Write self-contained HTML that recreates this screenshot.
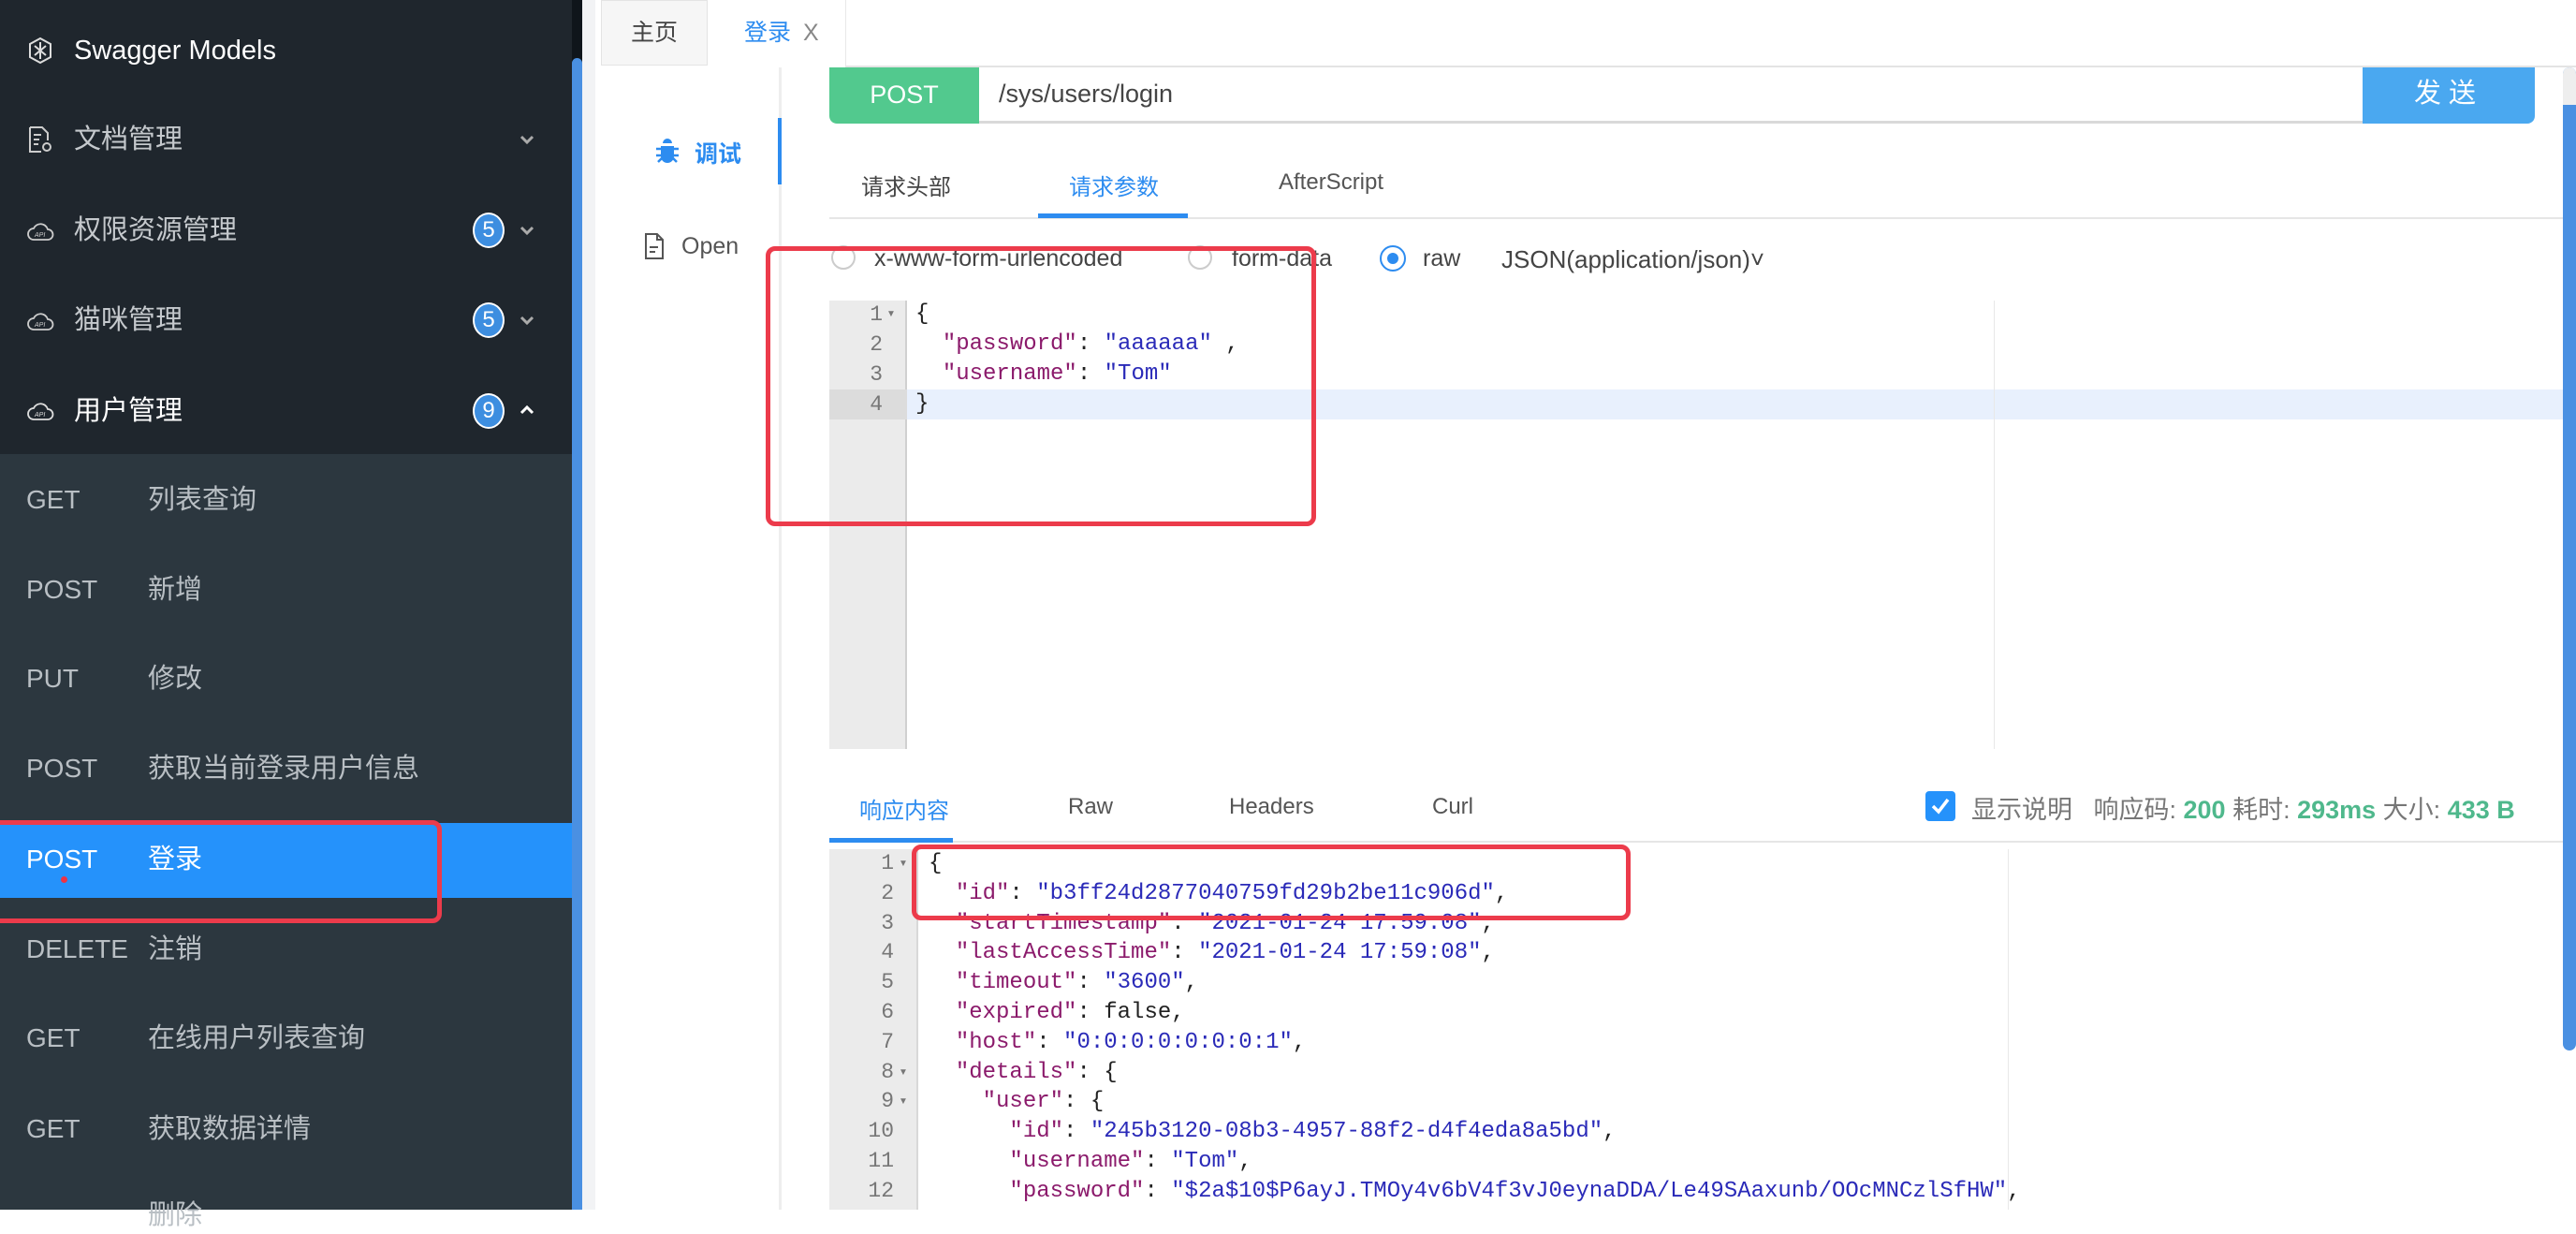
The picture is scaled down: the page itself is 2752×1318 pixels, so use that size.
<!DOCTYPE html>
<html><head><meta charset="utf-8">
<style>
*{margin:0;padding:0;box-sizing:border-box}
body{width:2752px;height:1292px;overflow:hidden;background:#fff;font-family:"Liberation Sans","Noto Sans CJK SC",sans-serif;position:relative}
.a{position:absolute;white-space:nowrap}
#side{position:absolute;left:0;top:0;width:611px;height:1292px;background:#1f262d}
#sub{position:absolute;left:0;top:485px;width:611px;height:807px;background:#2c373f}
.mi{position:absolute;left:79px;font-size:29px;color:#c5c9cd;line-height:40px}
.ic{position:absolute;left:28px;width:30px;height:30px}
.badge{position:absolute;left:505px;width:34px;height:38px;border-radius:50%;background:#3d8ee0;border:2px solid #fff;color:#fff;font-size:24px;text-align:center;line-height:34px}
.chev{position:absolute;left:555px;width:16px;height:16px}
.meth{position:absolute;left:28px;font-size:28px;color:#b9bfc4;line-height:40px}
.lab{position:absolute;left:158px;font-size:29px;color:#b9bfc4;line-height:40px}
.code{font-family:"Liberation Mono","DejaVu Sans Mono",monospace;font-size:24px}
.k{color:#8b1a6b}.s{color:#2a2ab8}.p{color:#222}
.ln{position:absolute;font-family:"Liberation Mono",monospace;font-size:23px;color:#777;text-align:right;white-space:pre}
</style></head><body>
<div id="side"></div>
<div id="sub"></div>
<div class="a" style="left:611px;top:0;width:11px;height:1292px;background:#0f151b"></div>
<div class="a" style="left:611px;top:62px;width:11px;height:1230px;background:#4a90e2;border-radius:6px 6px 0 0"></div>
<div class="a" style="left:622px;top:0;width:14px;height:1292px;background:#f2f3f5"></div>

<svg class="ic" style="top:39px" viewBox="0 0 30 30" fill="none" stroke="#ddd" stroke-width="2"><path d="M15 2l11 6v14l-11 6-11-6V8z"/><path d="M9 10l12 10M21 10L9 20M15 6v18"/></svg>
<div class="mi" style="top:34px;color:#fff">Swagger Models</div>

<svg class="ic" style="top:134px" viewBox="0 0 30 30" fill="none" stroke="#ccc" stroke-width="2"><path d="M4 2h13l6 6v8M4 2v26h12"/><path d="M8 10h8M8 15h6M8 20h5"/><circle cx="22" cy="23" r="4"/></svg>
<div class="mi" style="top:129px">文档管理</div>
<svg class="chev" style="top:141px" viewBox="0 0 16 16" fill="none" stroke="#aaa" stroke-width="3"><path d="M2 5l6 6 6-6"/></svg>

<svg class="ic" style="top:232px" viewBox="0 0 30 30" fill="none" stroke="#ccc" stroke-width="1.8"><path d="M8 24a6 6 0 010-12 8 8 0 0115 1 5.5 5.5 0 010 11z"/><text x="9" y="21" font-size="7" fill="#ccc" stroke="none" font-style="italic">API</text></svg>
<div class="mi" style="top:226px">权限资源管理</div>
<div class="badge" style="top:227px">5</div>
<svg class="chev" style="top:238px" viewBox="0 0 16 16" fill="none" stroke="#aaa" stroke-width="3"><path d="M2 5l6 6 6-6"/></svg>

<svg class="ic" style="top:328px" viewBox="0 0 30 30" fill="none" stroke="#ccc" stroke-width="1.8"><path d="M8 24a6 6 0 010-12 8 8 0 0115 1 5.5 5.5 0 010 11z"/><text x="9" y="21" font-size="7" fill="#ccc" stroke="none" font-style="italic">API</text></svg>
<div class="mi" style="top:322px">猫咪管理</div>
<div class="badge" style="top:323px">5</div>
<svg class="chev" style="top:334px" viewBox="0 0 16 16" fill="none" stroke="#aaa" stroke-width="3"><path d="M2 5l6 6 6-6"/></svg>

<svg class="ic" style="top:424px" viewBox="0 0 30 30" fill="none" stroke="#ddd" stroke-width="1.8"><path d="M8 24a6 6 0 010-12 8 8 0 0115 1 5.5 5.5 0 010 11z"/><text x="9" y="21" font-size="7" fill="#ddd" stroke="none" font-style="italic">API</text></svg>
<div class="mi" style="top:419px;color:#fff">用户管理</div>
<div class="badge" style="top:420px">9</div>
<svg class="chev" style="top:430px" viewBox="0 0 16 16" fill="none" stroke="#fff" stroke-width="3"><path d="M2 11l6-6 6 6"/></svg>

<div class="meth" style="top:514px">GET</div><div class="lab" style="top:514px">列表查询</div>
<div class="meth" style="top:610px">POST</div><div class="lab" style="top:610px">新增</div>
<div class="meth" style="top:705px">PUT</div><div class="lab" style="top:705px">修改</div>
<div class="meth" style="top:801px">POST</div><div class="lab" style="top:801px">获取当前登录用户信息</div>
<div class="a" style="left:0;top:879px;width:611px;height:80px;background:#2592fb"></div>
<div class="meth" style="top:898px;color:#fff">POST</div><div class="lab" style="top:898px;color:#fff">登录</div>
<div class="a" style="left:65px;top:936px;width:7px;height:7px;border-radius:50%;background:#ee3344"></div>
<div class="a" style="left:-10px;top:876px;width:482px;height:110px;border:5px solid #ec3b4b;border-radius:10px"></div>
<div class="meth" style="top:994px">DELETE</div><div class="lab" style="top:994px">注销</div>
<div class="meth" style="top:1089px">GET</div><div class="lab" style="top:1089px">在线用户列表查询</div>
<div class="meth" style="top:1186px">GET</div><div class="lab" style="top:1186px">获取数据详情</div>
<div class="lab" style="top:1278px">删除</div>

<div class="a" style="left:642px;top:0;width:114px;height:70px;background:#f6f6f6;border:1px solid #e4e4e4"></div>
<div class="a" style="left:674px;top:15px;font-size:25px;color:#444">主页</div>
<div class="a" style="left:795px;top:15px;font-size:25px;color:#2d8cf0">登录 <span style="color:#888;margin-left:6px">X</span></div>
<div class="a" style="left:903px;top:0;width:1849px;height:72px;border-left:1px solid #e8e8e8;border-bottom:2px solid #e4e4e4"></div>

<div class="a" style="left:832px;top:72px;width:3px;height:1220px;background:#eeeeee"></div>
<div class="a" style="left:831px;top:126px;width:4px;height:71px;background:#2d8cf0"></div>
<svg class="a" style="left:700px;top:147px" width="26" height="28" viewBox="0 0 26 28"><path d="M8 6a5 5 0 0110 0zM6 9h14v11a7 7 0 01-14 0z" fill="#2d8cf0"/><path d="M1 12h5M20 12h5M1 19h5M20 19h5M3 26l4-4M23 26l-4-4" stroke="#2d8cf0" stroke-width="2.5"/></svg>
<div class="a" style="left:742px;top:145px;font-size:25px;color:#2d8cf0;font-weight:bold">调试</div>
<svg class="a" style="left:688px;top:248px" width="22" height="30" viewBox="0 0 22 30" fill="none" stroke="#555" stroke-width="2"><path d="M2 2h12l6 6v20H2z"/><path d="M14 2v6h6M6 16h9M6 21h6"/></svg>
<div class="a" style="left:728px;top:249px;font-size:25px;color:#555">Open</div>

<div class="a" style="left:886px;top:72px;width:160px;height:60px;background:#52c98e;border-radius:0 0 0 8px;color:#fff;font-size:27px;text-align:center;line-height:58px">POST</div>
<div class="a" style="left:1046px;top:72px;width:1478px;height:60px;border-bottom:3px solid #d9d9d9"></div>
<div class="a" style="left:1067px;top:85px;font-size:27px;color:#444">/sys/users/login</div>
<div class="a" style="left:2524px;top:72px;width:184px;height:60px;background:#4aa8f0;border-radius:0 0 8px 0;color:#fff;font-size:29px;text-align:center;line-height:56px;letter-spacing:8px">发送</div>
<div class="a" style="left:2738px;top:72px;width:14px;height:1050px;background:#4a90e2;border-radius:7px"></div>
<div class="a" style="left:2738px;top:72px;width:14px;height:40px;background:#eee;border-radius:7px 7px 0 0"></div>

<div class="a" style="left:920px;top:180px;font-size:24px;color:#444">请求头部</div>
<div class="a" style="left:1142px;top:180px;font-size:24px;color:#2d8cf0">请求参数</div>
<div class="a" style="left:1366px;top:181px;font-size:24px;color:#555">AfterScript</div>
<div class="a" style="left:886px;top:232px;width:1852px;height:2px;background:#e6e6e6"></div>
<div class="a" style="left:1109px;top:228px;width:160px;height:5px;background:#2d8cf0"></div>

<div class="a" style="left:888px;top:262px;width:26px;height:26px;border:2px solid #ccc;border-radius:50%"></div>
<div class="a" style="left:934px;top:262px;font-size:25px;color:#444">x-www-form-urlencoded</div>
<div class="a" style="left:1269px;top:262px;width:26px;height:26px;border:2px solid #ccc;border-radius:50%"></div>
<div class="a" style="left:1316px;top:262px;font-size:25px;color:#444">form-data</div>
<div class="a" style="left:1474px;top:262px;width:28px;height:28px;border:2px solid #2d8cf0;border-radius:50%"></div>
<div class="a" style="left:1482px;top:270px;width:12px;height:12px;background:#2d8cf0;border-radius:50%"></div>
<div class="a" style="left:1520px;top:262px;font-size:25px;color:#444">raw</div>
<div class="a" style="left:1604px;top:262px;font-size:26px;color:#444">JSON(application/json)˅</div>

<div class="a" style="left:886px;top:321px;width:83px;height:479px;background:#ebebeb;border-right:2px solid #d0d0d0"></div>
<div class="a" style="left:969px;top:416px;width:1769px;height:32px;background:#e8f0fd"></div>
<div class="a" style="left:886px;top:416px;width:83px;height:32px;background:#dcdcdc"></div>
<div class="a" style="left:2130px;top:321px;width:1px;height:479px;background:#e8e8e8"></div>
<div class="ln" style="left:895px;top:320px;width:48px;line-height:32px">1
2
3
4</div>
<div class="a" style="left:947px;top:320px;font-size:10px;line-height:32px;color:#777">▼</div>
<div class="a code" style="left:978px;top:320px;line-height:32px;font-size:24px;white-space:pre"><span class="p">{</span>
  <span class="k">"password"</span><span class="p">: </span><span class="s">"aaaaaa"</span><span class="p"> ,</span>
  <span class="k">"username"</span><span class="p">: </span><span class="s">"Tom"</span>
<span class="p">}</span></div>
<div class="a" style="left:818px;top:263px;width:588px;height:299px;border:5px solid #ec3b4b;border-radius:10px"></div>

<div class="a" style="left:918px;top:846px;font-size:24px;color:#2d8cf0">响应内容</div>
<div class="a" style="left:1141px;top:848px;font-size:24px;color:#555">Raw</div>
<div class="a" style="left:1313px;top:848px;font-size:24px;color:#555">Headers</div>
<div class="a" style="left:1530px;top:848px;font-size:24px;color:#555">Curl</div>
<div class="a" style="left:886px;top:898px;width:1852px;height:2px;background:#e6e6e6"></div>
<div class="a" style="left:886px;top:895px;width:132px;height:5px;background:#2d8cf0"></div>
<div class="a" style="left:2057px;top:845px;width:32px;height:32px;background:#2592fb;border-radius:4px"></div>
<svg class="a" style="left:2063px;top:852px" width="20" height="18" viewBox="0 0 20 18" fill="none" stroke="#fff" stroke-width="3.5"><path d="M2 9l6 6L18 2"/></svg>
<div class="a" style="left:2106px;top:843px;font-size:27px;color:#777">显示说明 &nbsp; 响应码: <b style="color:#4fb88c">200</b> 耗时: <b style="color:#4fb88c">293ms</b> 大小: <b style="color:#4fb88c">433 B</b></div>

<div class="a" style="left:886px;top:907px;width:95px;height:385px;background:#ebebeb;border-right:2px solid #d8d8d8"></div>
<div class="a" style="left:2145px;top:907px;width:1px;height:385px;background:#e8e8e8"></div>
<div class="ln" style="left:895px;top:907px;width:60px;line-height:31.8px">1
2
3
4
5
6
7
8
9
10
11
12</div>
<div class="a" style="left:960px;top:907px;font-size:10px;color:#777;line-height:31.8px;white-space:pre">▼






▼
▼</div>
<div class="a code" style="left:992px;top:907px;line-height:31.8px;white-space:pre"><span class="p">{</span>
  <span class="k">"id"</span><span class="p">: </span><span class="s">"b3ff24d2877040759fd29b2be11c906d"</span><span class="p">,</span>
  <span class="k">"startTimestamp"</span><span class="p">: </span><span class="s">"2021-01-24 17:59:08"</span><span class="p">,</span>
  <span class="k">"lastAccessTime"</span><span class="p">: </span><span class="s">"2021-01-24 17:59:08"</span><span class="p">,</span>
  <span class="k">"timeout"</span><span class="p">: </span><span class="s">"3600"</span><span class="p">,</span>
  <span class="k">"expired"</span><span class="p">: false,</span>
  <span class="k">"host"</span><span class="p">: </span><span class="s">"0:0:0:0:0:0:0:1"</span><span class="p">,</span>
  <span class="k">"details"</span><span class="p">: {</span>
    <span class="k">"user"</span><span class="p">: {</span>
      <span class="k">"id"</span><span class="p">: </span><span class="s">"245b3120-08b3-4957-88f2-d4f4eda8a5bd"</span><span class="p">,</span>
      <span class="k">"username"</span><span class="p">: </span><span class="s">"Tom"</span><span class="p">,</span>
      <span class="k">"password"</span><span class="p">: </span><span class="s">"$2a$10$P6ayJ.TMOy4v6bV4f3vJ0eynaDDA/Le49SAaxunb/OOcMNCzlSfHW"</span><span class="p">,</span></div>
<div class="a" style="left:974px;top:902px;width:768px;height:81px;border:5px solid #ec3b4b;border-radius:10px"></div>
</body></html>
